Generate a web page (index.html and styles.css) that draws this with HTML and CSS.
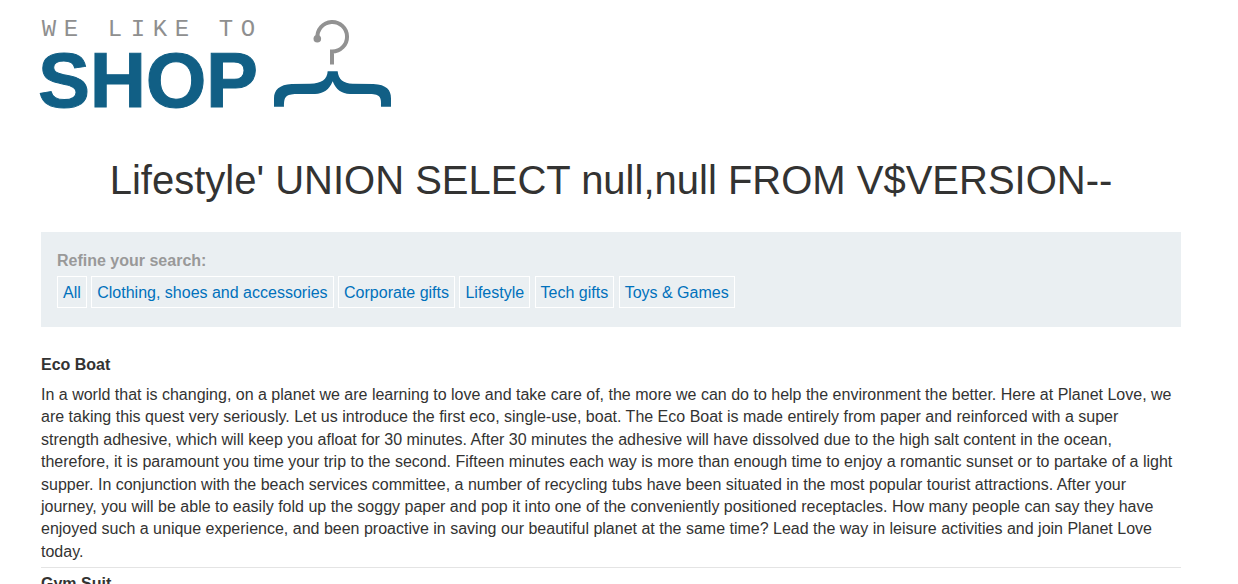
FILE: index.html
```html
<!DOCTYPE html>
<html lang="en">
<head>
<meta charset="utf-8">
<title>We Like To Shop</title>
<link rel="stylesheet" href="styles.css">
</head>
<body>
<main class="container">
  <header class="logo">
    <svg class="logo-art" viewBox="41 18 351 92" width="351" height="92" role="img" aria-label="We like to shop">
      <text class="logo-tagline" y="36" x="49 71 93 115 138 160 182 204 226 248">WE LIKE TO</text>
      <text class="logo-name" y="107" x="64 118 176 232">SHOP</text>
      <path class="hook" d="M317.5 38A14.8 14.8 0 1 1 332 51.5V64.5"/>
      <circle class="hook-tip" cx="317.3" cy="38.7" r="3.8"/>
      <path class="hanger" transform="translate(260 10) scale(.3333)" d="M203 184H233C235 208 250 221 278 221L340 222C380 224 393 240 393 265V290H363C364 262 362 253 330 252H270C245 251 228 240 218 214C208 240 190 251 165 252H110C77 253 72 260 72 290H42V265C42 240 58 224 95 222L150 221C185 221 202 208 203 184Z"/>
    </svg>
  </header>
  <h1 class="title">Lifestyle' UNION SELECT null,null FROM V$VERSION--</h1>
  <section class="filters">
    <span class="filters-label">Refine your search:</span>
    <nav>
      <a class="filter" href="#">All</a>
      <a class="filter" href="#">Clothing, shoes and accessories</a>
      <a class="filter" href="#">Corporate gifts</a>
      <a class="filter" href="#">Lifestyle</a>
      <a class="filter" href="#">Tech gifts</a>
      <a class="filter" href="#">Toys &amp; Games</a>
    </nav>
  </section>
  <table class="products">
    <tbody>
      <tr><th scope="row">Eco Boat</th></tr>
      <tr><td>In a world that is changing, on a planet we are learning to love and take care of, the more we can do to help the environment the better. Here at Planet Love, we are taking this quest very seriously. Let us introduce the first eco, single-use, boat. The Eco Boat is made entirely from paper and reinforced with a super strength adhesive, which will keep you afloat for 30 minutes. After 30 minutes the adhesive will have dissolved due to the high salt content in the ocean, therefore, it is paramount you time your trip to the second. Fifteen minutes each way is more than enough time to enjoy a romantic sunset or to partake of a light supper. In conjunction with the beach services committee, a number of recycling tubs have been situated in the most popular tourist attractions. After your journey, you will be able to easily fold up the soggy paper and pop it into one of the conveniently positioned receptacles. How many people can say they have enjoyed such a unique experience, and been proactive in saving our beautiful planet at the same time? Lead the way in leisure activities and join Planet Love today.</td></tr>
      <tr><th scope="row">Gym Suit</th></tr>
    </tbody>
  </table>
</main>
</body>
</html>
```
FILE: styles.css
```css
* {
  box-sizing: border-box;
}

body {
  margin: 0;
  padding: 18px 16px 0 0;
  height: 100vh;
  overflow: hidden;
  background: #fff;
  color: #333332;
  font-family: "Liberation Sans", Arial, sans-serif;
  font-size: 16px;
  line-height: 1.4;
}

.container {
  max-width: 1140px;
  margin: 0 auto;
}

.logo-art {
  display: block;
  overflow: visible;
}

.logo-tagline {
  fill: #8f8f8f;
  font-family: "Liberation Mono", "Courier New", monospace;
  font-size: 24px;
  text-anchor: middle;
}

.logo-name {
  fill: #115f85;
  stroke: #115f85;
  stroke-width: 1;
  font-size: 78px;
  font-weight: 700;
  text-anchor: middle;
}

.hook {
  fill: none;
  stroke: #929292;
  stroke-width: 4;
}

.hook-tip {
  fill: #929292;
}

.hanger {
  fill: #115f85;
}

.title {
  margin: 42px 0 24px;
  font-size: 40px;
  font-weight: 400;
  text-align: center;
}

.filters {
  padding: 18px 16px 19px;
  background: #eaeff2;
}

.filters-label {
  display: block;
  margin-bottom: 4px;
  color: #999;
  font-weight: 700;
  line-height: 22px;
}

.filters nav {
  display: flow-root;
  line-height: 20px;
}

.filter {
  display: inline-block;
  padding: 6px 5px 4px;
  border: 1px solid #fff;
  color: #0071bc;
  text-decoration: none;
  vertical-align: top;
}

.products {
  width: 100%;
  margin-top: 27px;
  border-collapse: collapse;
}

.products th,
.products td {
  padding: 0;
  text-align: left;
}

.products th {
  padding-bottom: 8px;
  line-height: 22px;
}

.products td {
  padding: 0 4px 4px 0;
}

.products tr:nth-child(odd):not(:first-child) th {
  padding-top: 5px;
  border-top: 1px solid #e4e4e4;
}
```
